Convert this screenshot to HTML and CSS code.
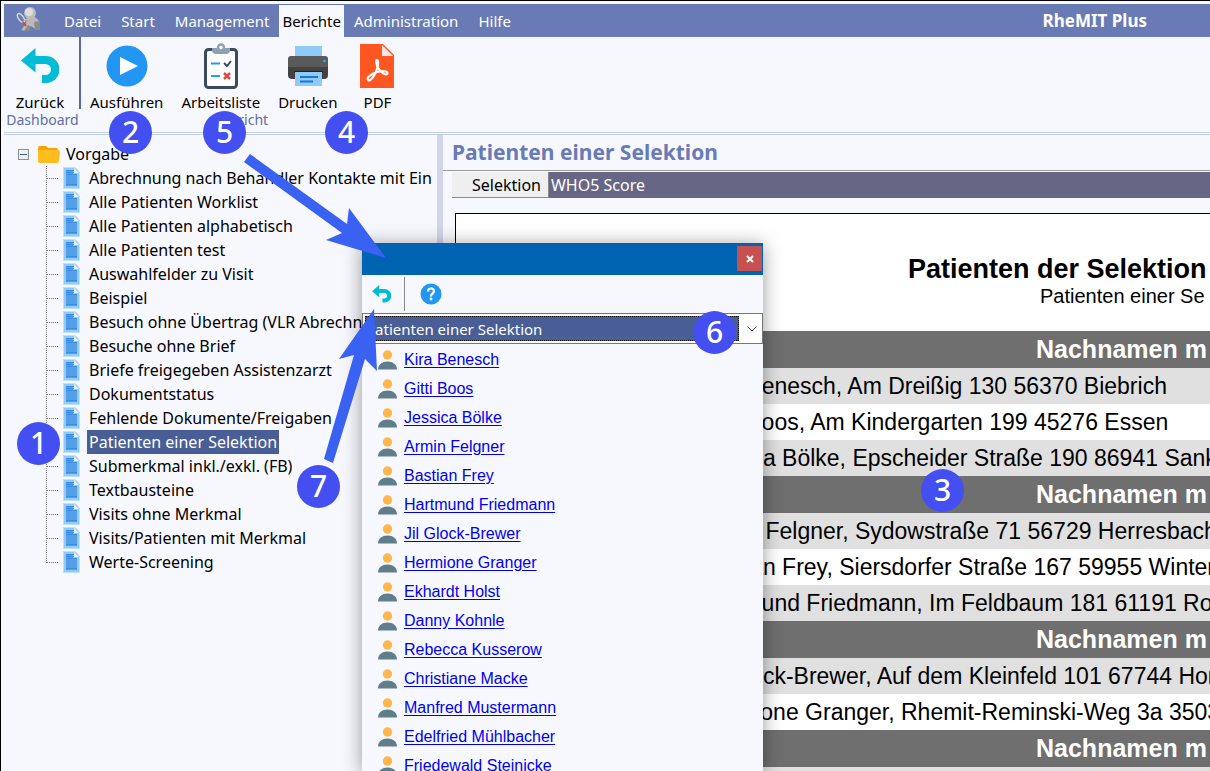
FILE: index.html
```html
<!DOCTYPE html>
<html lang="de">
<head>
    <meta charset="UTF-8">
    <meta name="viewport" content="width=device-width, initial-scale=1.0">
    <title>RheMIT Plus</title>
    <link rel="stylesheet" href="styles.css">
</head>
<body>
    <!-- Shared icons -->
    <svg class="icon-defs" aria-hidden="true">
        <symbol id="icon-back" viewBox="0 0 38 36">
            <path d="M0 12.500 14.500 0v8H25a13.500 13.500 0 0 1 0 27h-4V27h3.500a5.500 5.500 0 0 0 0-11h-10v8.500z" fill="#00bcd4"/>
        </symbol>
        <symbol id="icon-doc" viewBox="0 0 17 22">
            <path d="M0 0h12l5 5v17H0z" fill="#bfe0fb"/>
            <path d="M1 1h11l4 4v16H1z" fill="#90caf9"/>
            <path d="M11 1l5 5h-5z" fill="#e1f5fe"/>
            <path d="M3 3h7v4h4v12H3z" fill="#559fe6"/>
            <path d="M3 3.500h8M3 5.500h8M3 7.500h11M3 17.500h11" stroke="#3a8edd"/>
        </symbol>
        <symbol id="icon-person" viewBox="0 0 19 20">
            <circle cx="9.500" cy="5" r="4.700" fill="#ffb74d"/>
            <path d="M0 19.500c0-5 4-8 9.500-8s9.500 3 9.500 8z" fill="#607d8b"/>
        </symbol>
    </svg>

    <div class="window">
        <nav class="menubar">
            <svg class="logo" viewBox="0 0 26 26" aria-hidden="true">
                <ellipse cx="5" cy="11" rx="2.500" ry="5" transform="rotate(-35 5 11)" fill="none" stroke="#d5d5d5" stroke-width="1.500"/>
                <path d="M7 14l4-3 8-1 4 4v8h-4l-4-3-5 5-5-1 4-5 2-5-2 1z" fill="#b9b9b9"/>
                <path d="M8 24l4-6 3 2-2 4zM18 15l6-1v9h-5z" fill="#8b8b8b"/>
                <path d="M7 15l3 4" stroke="#d8413b" stroke-width="2"/>
                <circle cx="14" cy="6" r="6" fill="#bdbdbd"/>
                <circle cx="13" cy="5" r="4" fill="#dedede"/>
            </svg>
            <a href="#">Datei</a>
            <a href="#">Start</a>
            <a href="#">Management</a>
            <a href="#" class="active">Berichte</a>
            <a href="#">Administration</a>
            <a href="#">Hilfe</a>
            <span class="brand">RheMIT Plus</span>
        </nav>

        <div class="ribbon">
            <div class="ribbon-group">
                <div class="ribbon-buttons">
                    <button type="button">
                        <svg width="38" height="36"><use href="#icon-back"/></svg>
                        Zurück
                    </button>
                </div>
                <span class="group-label">Dashboard</span>
            </div>
            <div class="ribbon-group">
                <div class="ribbon-buttons">
                    <button type="button">
                        <svg width="42" height="42" viewBox="0 0 42 42">
                            <circle cx="21" cy="21" r="20.500" fill="#2196f3"/>
                            <path d="M14 12v18l18-9z" fill="#fff"/>
                        </svg>
                        Ausführen
                    </button>
                    <button type="button">
                        <svg width="34" height="46" viewBox="0 0 34 46">
                            <rect x="1.500" y="6.500" width="31" height="38" rx="3" fill="#fff" stroke="#3b4a5c" stroke-width="3"/>
                            <path d="M8 5h18v2a4 4 0 0 1-4 4H12a4 4 0 0 1-4-4z" fill="#90a0b2"/>
                            <circle cx="17" cy="4.500" r="3" fill="#fff" stroke="#90a0b2" stroke-width="2.500"/>
                            <path d="M7 20.500h9" stroke="#2196f3" stroke-width="2"/>
                            <path d="M7 33h9" stroke="#1aa6d6" stroke-width="2"/>
                            <path d="M20 20l3 3 4-5" fill="none" stroke="#3b4a5c" stroke-width="2"/>
                            <path d="M20 30l6 6M26 30l-6 6" stroke="#d94a42" stroke-width="2.500"/>
                        </svg>
                        Arbeitsliste
                    </button>
                    <button type="button">
                        <svg width="42" height="42" viewBox="0 0 42 42">
                            <path d="M8 1h27v13H8z" fill="#90caf9"/>
                            <path d="M4 11h34a3 3 0 0 1 3 3v10H1V14a3 3 0 0 1 3-3z" fill="#5a5a5a"/>
                            <path d="M1 22h40v8a4 4 0 0 1-4 4H5a4 4 0 0 1-4-4z" fill="#424242"/>
                            <path d="M7 26h29v2H7z" fill="#242424"/>
                            <path d="M8 27h27v14H8z" fill="#90caf9"/>
                            <path d="M13 32h18M13 36.500h13" stroke="#1976d2" stroke-width="2"/>
                            <circle cx="37.500" cy="16" r="1.300" fill="#00c8e0"/>
                        </svg>
                        Drucken
                    </button>
                    <button type="button" class="narrow">
                        <svg width="34" height="44" viewBox="0 0 34 44">
                            <path d="M0 0h23l11 11v33H0z" fill="#ff5722"/>
                            <path d="M22 1v11h11z" fill="#fbe9e7"/>
                            <path d="M8 36c-2-2 3-6 9-8 5-1.500 11-1 10.500 1.500-1 3-8-2-10-6.500-1.500-4-2-7-.5-7s1.500 4 0 9-6 13-9 11z" fill="none" stroke="#fff" stroke-width="2.200"/>
                        </svg>
                        PDF
                    </button>
                </div>
                <span class="group-label">Bericht</span>
            </div>
        </div>

        <div class="workspace">
            <!-- Report tree -->
            <aside class="tree">
                <div class="tree-root">
                    <button type="button" class="toggle" aria-label="Vorgabe zuklappen"></button>
                    <svg width="22" height="17" viewBox="0 0 22 17">
                        <path d="M0 2a2 2 0 0 1 2-2h6l2 2h8a2 2 0 0 1 2 2v11H2a2 2 0 0 1-2-2z" fill="#ffa000"/>
                        <path d="M0 4h20a2 2 0 0 1 2 2l-1 9a2 2 0 0 1-2 2H2a2 2 0 0 1-2-2z" fill="#ffbe1f"/>
                    </svg>
                    <span>Vorgabe</span>
                </div>
                <ul>
                    <li><svg><use href="#icon-doc"/></svg><a href="#">Abrechnung nach Behandler Kontakte mit Ein</a></li>
                    <li><svg><use href="#icon-doc"/></svg><a href="#">Alle Patienten Worklist</a></li>
                    <li><svg><use href="#icon-doc"/></svg><a href="#">Alle Patienten alphabetisch</a></li>
                    <li><svg><use href="#icon-doc"/></svg><a href="#">Alle Patienten test</a></li>
                    <li><svg><use href="#icon-doc"/></svg><a href="#">Auswahlfelder zu Visit</a></li>
                    <li><svg><use href="#icon-doc"/></svg><a href="#">Beispiel</a></li>
                    <li><svg><use href="#icon-doc"/></svg><a href="#">Besuch ohne Übertrag (VLR Abrechn</a></li>
                    <li><svg><use href="#icon-doc"/></svg><a href="#">Besuche ohne Brief</a></li>
                    <li><svg><use href="#icon-doc"/></svg><a href="#">Briefe freigegeben Assistenzarzt</a></li>
                    <li><svg><use href="#icon-doc"/></svg><a href="#">Dokumentstatus</a></li>
                    <li><svg><use href="#icon-doc"/></svg><a href="#">Fehlende Dokumente/Freigaben</a></li>
                    <li><svg><use href="#icon-doc"/></svg><a href="#" class="selected">Patienten einer Selektion</a></li>
                    <li><svg><use href="#icon-doc"/></svg><a href="#">Submerkmal inkl./exkl. (FB)</a></li>
                    <li><svg><use href="#icon-doc"/></svg><a href="#">Textbausteine</a></li>
                    <li><svg><use href="#icon-doc"/></svg><a href="#">Visits ohne Merkmal</a></li>
                    <li><svg><use href="#icon-doc"/></svg><a href="#">Visits/Patienten mit Merkmal</a></li>
                    <li><svg><use href="#icon-doc"/></svg><a href="#">Werte-Screening</a></li>
                </ul>
            </aside>

            <!-- Report preview -->
            <main class="report">
                <h1>Patienten einer Selektion</h1>
                <div class="tabs">
                    <button type="button" class="current">Selektion</button>
                    <button type="button">WHO5 Score</button>
                </div>
                <div class="page">
                    <h2>Patienten der Selektion</h2>
                    <p>Patienten einer Se</p>
                    <table>
                        <tr><th>Nachnamen m</th></tr>
                        <tr><td>Kira Benesch, Am Dreißig 130 56370 Biebrich</td></tr>
                        <tr><td>Gitti Boos, Am Kindergarten 199 45276 Essen</td></tr>
                        <tr><td>Jessica Bölke, Epscheider Straße 190 86941 Sank</td></tr>
                        <tr><th>Nachnamen m</th></tr>
                        <tr><td>Armin Felgner, Sydowstraße 71 56729 Herresbach</td></tr>
                        <tr><td>Bastian Frey, Siersdorfer Straße 167 59955 Winter</td></tr>
                        <tr><td>Hartmund Friedmann, Im Feldbaum 181 61191 Ro</td></tr>
                        <tr><th>Nachnamen m</th></tr>
                        <tr><td>Jil Glock-Brewer, Auf dem Kleinfeld 101 67744 Hor</td></tr>
                        <tr><td>Hermione Granger, Rhemit-Reminski-Weg 3a 3503</td></tr>
                        <tr><th>Nachnamen m</th></tr>
                        <tr><td></td></tr>
                    </table>
                </div>
            </main>
        </div>
    </div>

    <!-- Worklist window -->
    <section class="popup">
        <div class="popup-title">
            <button type="button" aria-label="Schließen">
                <svg width="8" height="8" viewBox="0 0 8 8"><path d="M1 1l6 6M7 1l-6 6" stroke="#fff" stroke-width="2"/></svg>
            </button>
        </div>
        <div class="popup-tools">
            <button type="button" aria-label="Zurück"><svg width="19" height="18"><use href="#icon-back"/></svg></button>
            <button type="button" aria-label="Hilfe">
                <svg width="22" height="22" viewBox="0 0 22 22">
                    <circle cx="11" cy="11" r="10.500" fill="#2196f3"/>
                    <path d="M8 8.500C8 4.500 14 4.500 14 8.300 14 10.500 11 10.500 11 13.500" fill="none" stroke="#fff" stroke-width="2.200"/>
                    <circle cx="11" cy="16" r="1.400" fill="#fff"/>
                </svg>
            </button>
        </div>
        <div class="combo">
            <select aria-label="Arbeitsliste">
                <option>Patienten einer Selektion</option>
            </select>
            <svg width="10" height="6" viewBox="0 0 10 6"><path d="M.5.5 5 5 9.500.5" fill="none" stroke="#444"/></svg>
        </div>
        <ul>
            <li><svg><use href="#icon-person"/></svg><a href="#">Kira Benesch</a></li>
            <li><svg><use href="#icon-person"/></svg><a href="#">Gitti Boos</a></li>
            <li><svg><use href="#icon-person"/></svg><a href="#">Jessica Bölke</a></li>
            <li><svg><use href="#icon-person"/></svg><a href="#">Armin Felgner</a></li>
            <li><svg><use href="#icon-person"/></svg><a href="#">Bastian Frey</a></li>
            <li><svg><use href="#icon-person"/></svg><a href="#">Hartmund Friedmann</a></li>
            <li><svg><use href="#icon-person"/></svg><a href="#">Jil Glock-Brewer</a></li>
            <li><svg><use href="#icon-person"/></svg><a href="#">Hermione Granger</a></li>
            <li><svg><use href="#icon-person"/></svg><a href="#">Ekhardt Holst</a></li>
            <li><svg><use href="#icon-person"/></svg><a href="#">Danny Kohnle</a></li>
            <li><svg><use href="#icon-person"/></svg><a href="#">Rebecca Kusserow</a></li>
            <li><svg><use href="#icon-person"/></svg><a href="#">Christiane Macke</a></li>
            <li><svg><use href="#icon-person"/></svg><a href="#">Manfred Mustermann</a></li>
            <li><svg><use href="#icon-person"/></svg><a href="#">Edelfried Mühlbacher</a></li>
            <li><svg><use href="#icon-person"/></svg><a href="#">Friedewald Steinicke</a></li>
        </ul>
    </section>

    <!-- Callouts -->
    <svg class="arrows" width="420" height="480" aria-hidden="true">
        <path d="M250 154 347 224 349 208 386 258 326 240 342 233 244 162z"/>
        <path d="M324 459 354 355 339 359 374 309 377 371 365 359 333 463z"/>
    </svg>
    <span class="callout callout-1">1</span>
    <span class="callout callout-2">2</span>
    <span class="callout callout-3">3</span>
    <span class="callout callout-4">4</span>
    <span class="callout callout-5">5</span>
    <span class="callout callout-6">6</span>
    <span class="callout callout-7">7</span>
</body>
</html>
```

FILE: styles.css
```css
* {
    box-sizing: border-box;
}

body {
    margin: 0;
    height: 100vh;
    overflow: hidden;
    position: relative;
    font-family: "Noto Sans", "Open Sans", sans-serif;
    font-size: 16px;
    color: #000;
    background-color: #f7f8fd;
}

button {
    font: inherit;
    color: inherit;
    background: none;
    border: none;
    padding: 0;
    cursor: pointer;
}

a {
    color: inherit;
    text-decoration: none;
}

ul {
    list-style: none;
    margin: 0;
    padding: 0;
}

.icon-defs {
    position: absolute;
    width: 0;
    height: 0;
}

.window {
    height: 100%;
    display: flex;
    flex-direction: column;
    border-top: 1px solid #000;
    border-left: 1px solid #000;
    padding: 3px 0 0 3px;
}

/* Menu */
.menubar {
    display: flex;
    align-items: stretch;
    height: 33px;
    flex-shrink: 0;
    background-color: #697bb5;
    color: #fff;
    font-size: 15px;
    line-height: 34px;
}

.menubar a {
    padding: 0 10px;
}

.menubar .active {
    margin-top: 1px;
    padding: 0 3px;
    line-height: 32px;
    background-color: #f7f8fd;
    color: #000;
}

.logo {
    width: 26px;
    height: 26px;
    margin: 3px 12px 0 12px;
}

.brand {
    margin-left: auto;
    padding-right: 63px;
    font-size: 17px;
    font-weight: bold;
}

/* Ribbon */
.ribbon {
    display: flex;
    height: 98px;
    flex-shrink: 0;
    border-bottom: 3px double #c5cfe4;
}

.ribbon-group {
    display: flex;
    flex-direction: column;
    align-items: center;
}

.ribbon-buttons {
    display: flex;
    height: 72px;
}

.ribbon-group:first-child .ribbon-buttons {
    width: 77px;
    padding-right: 3px;
    justify-content: center;
    border-right: 2px solid #5468a5;
}

.ribbon-buttons button {
    display: grid;
    grid-template-rows: 58px 14px;
    place-items: center;
    padding: 0 9px;
    font-size: 15px;
    line-height: 14px;
}

.ribbon-buttons .narrow {
    min-width: 62px;
}

.group-label {
    color: #5b6fa8;
    font-size: 14px;
    line-height: 22px;
}

/* Main area */
.workspace {
    display: flex;
    flex: 1;
    min-height: 0;
}

.tree {
    width: 439px;
    flex-shrink: 0;
    padding-top: 7px;
    border-right: 6px solid #d0d5e9;
}

.tree-root {
    display: flex;
    align-items: center;
    height: 24px;
    padding-left: 14px;
}

.tree-root svg {
    margin: 0 6px 0 9px;
}

.toggle {
    width: 11px;
    height: 11px;
    border: 1px solid #8a8f98;
    background: linear-gradient(#44559a, #44559a) center / 7px 1px no-repeat #eef0f4;
}

.tree ul {
    margin: 0 4px 0 42px;
    overflow: hidden;
}

.tree li {
    display: flex;
    align-items: center;
    height: 24px;
    white-space: nowrap;
}

/* Dotted branch from the previous row's centre to this one's */
.tree li::before {
    content: "";
    align-self: flex-start;
    flex-shrink: 0;
    width: 11px;
    height: 24px;
    margin-top: -12px;
    border-left: 1px dotted #777;
    border-bottom: 1px dotted #777;
}

.tree li:first-child::before {
    height: 12px;
    margin-top: 0;
}

.tree li svg {
    width: 17px;
    height: 22px;
    flex-shrink: 0;
    margin: 0 7px 0 5px;
}

.tree li a {
    padding: 0 2px;
    line-height: 24px;
}

.tree .selected {
    background-color: #4a5e96;
    color: #fff;
}

/* Report */
.report {
    display: flex;
    flex-direction: column;
    flex: 1;
    min-width: 0;
}

.report h1 {
    margin: 0;
    padding-left: 9px;
    border-bottom: 1px solid #999;
    color: #697bb5;
    font-size: 21px;
    line-height: 35px;
}

.tabs {
    display: flex;
    height: 26px;
    margin: 1px 0 15px 9px;
    background-color: #676785;
    color: #fff;
    line-height: 26px;
}

.tabs button {
    padding: 0 2px;
}

.tabs .current {
    padding: 0 7px 0 20px;
    border-right: 1px solid #888;
    border-bottom: 1px solid #888;
    background-color: #efefef;
    color: #000;
}

.page {
    flex: 1;
    min-height: 0;
    margin-left: 12px;
    overflow: hidden;
    border-top: 1px solid #000;
    border-left: 1px solid #000;
    background-color: #fff;
    font-family: "Liberation Sans", Arial, sans-serif;
    white-space: nowrap;
}

.page h2 {
    margin: 0;
    padding: 40px 0 0 452px;
    font-size: 27px;
    line-height: 30px;
}

.page p {
    margin: 0 0 23px;
    padding-left: 584px;
    font-size: 20px;
    line-height: 24px;
}

.page table {
    width: 100%;
    border-collapse: collapse;
}

.page th {
    max-width: 0;
    height: 37px;
    padding: 0 0 0 580px;
    background-color: #6f6f6f;
    color: #fff;
    font-size: 25px;
    line-height: 37px;
    text-align: left;
}

.page td {
    max-width: 0;
    height: 36px;
    padding: 0 0 0 243px;
    background-color: #e0e0e0;
    font-size: 23px;
    line-height: 36px;
}

/* Every second row of a four-row block stays white */
.page tr:nth-child(4n + 3) td {
    background-color: #fff;
}

/* Popup */
.popup {
    position: absolute;
    top: 243px;
    bottom: 0;
    left: 362px;
    width: 401px;
    overflow: hidden;
    background-color: #f7f8fd;
    box-shadow: 0 2px 18px rgba(0, 0, 0, 0.4);
}

.popup-title {
    display: flex;
    justify-content: flex-end;
    height: 32px;
    padding: 3px 1px;
    background-color: #0063b1;
}

.popup-title button {
    display: grid;
    place-items: center;
    width: 25px;
    height: 25px;
    background-color: #c75050;
}

.popup-tools {
    display: flex;
    height: 38px;
    padding: 2px 0;
}

.popup-tools button {
    display: grid;
    place-items: center;
    padding: 0 15px;
}

.popup-tools button:first-child {
    width: 43px;
    padding: 0 14px 0 10px;
    border-right: 1px solid #888;
}

.combo {
    display: flex;
    align-items: center;
    height: 31px;
    padding: 2px 5px 2px 2px;
    border: 1px solid #777;
    background-color: #fff;
}

.combo select {
    flex: 1;
    height: 25px;
    margin-right: 8px;
    padding: 0;
    appearance: none;
    border: 1px dotted #000;
    border-radius: 0;
    background-color: #4a5e96;
    color: #fff;
    font-family: inherit;
    font-size: 15px;
}

.popup ul {
    padding: 1px 0 0 16px;
    font-family: "Liberation Sans", Arial, sans-serif;
}

.popup li {
    display: flex;
    align-items: center;
    gap: 7px;
    height: 29px;
}

.popup li svg {
    width: 19px;
    height: 20px;
}

.popup li a {
    color: #0000f0;
    text-decoration: underline;
    text-underline-offset: 2px;
}

/* Callouts over the window */
.arrows {
    position: absolute;
    top: 0;
    left: 0;
    fill: #3a62f2;
    pointer-events: none;
}

.callout {
    position: absolute;
    width: 43px;
    height: 43px;
    border-radius: 50%;
    background-color: #434ff0;
    color: #fff;
    font-size: 30px;
    font-weight: 500;
    line-height: 42px;
    text-align: center;
}

.callout-1 {
    top: 422px;
    left: 17px;
}

.callout-2 {
    top: 111px;
    left: 109px;
}

.callout-3 {
    top: 469px;
    left: 921px;
}

.callout-4 {
    top: 111px;
    left: 325px;
}

.callout-5 {
    top: 111px;
    left: 203px;
}

.callout-6 {
    top: 311px;
    left: 693px;
}

.callout-7 {
    top: 465px;
    left: 297px;
}
```
